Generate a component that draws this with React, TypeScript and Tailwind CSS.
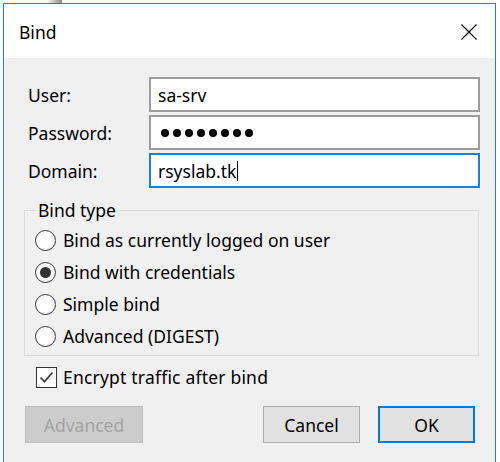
import { ReactNode } from 'react';

const font = { fontFamily: '"Noto Sans", "Open Sans", sans-serif' };

function Field({ label, children, focused }: { label: string; children: ReactNode; focused?: boolean }) {
  return (
    <div className="flex items-center h-[35px]">
      <div className="w-[121px] shrink-0 text-black">{label}</div>
      <div
        className={
          'w-[331px] shrink-0 h-[35px] border-2 bg-white flex items-center pl-[7px] ' +
          (focused ? 'border-[#1a7fd6]' : 'border-[#9c9c9c]')
        }
      >
        {children}
      </div>
    </div>
  );
}

function Radio({ label, checked }: { label: string; checked?: boolean }) {
  return (
    <div className="flex items-center h-[32px]">
      <div className="w-[21px] h-[21px] rounded-full border border-[#333] bg-white flex items-center justify-center">
        {checked && <div className="w-[11px] h-[11px] rounded-full bg-[#333]" />}
      </div>
      <span className="ml-[7px]">{label}</span>
    </div>
  );
}

export default function App() {
  return (
    <div className="w-[500px] h-[462px] bg-white flex flex-col overflow-hidden text-[17.5px] leading-[24px] text-black" style={font}>
      {/* bit of the window behind */}
      <div className="h-[3px] flex">
        <div className="ml-[48px] w-[14px] h-[3px] bg-linear-to-r from-[#f4f4f4] to-[#8a8a8a]" />
      </div>
      <div className="ml-[3px] w-[493px] flex-1 flex flex-col border-t border-l border-r border-[#1c80d6]">
        {/* title bar */}
        <div className="h-[54px] bg-white flex items-center justify-between pl-[15px] pr-[18px] pt-[2px]">
          <span className="text-[17.5px]">Bind</span>
          <svg width="16" height="16" viewBox="0 0 16 16" className="mt-[-1px]">
            <path d="M0.5 0.5 L15.5 15.5 M15.5 0.5 L0.5 15.5" stroke="#000" strokeWidth="1.1" fill="none" />
          </svg>
        </div>

        {/* body */}
        <div className="flex-1 bg-[#f0f0f0] pl-[20px] pr-[14px] pt-[19px] flex flex-col">
          <div className="pl-[4px] flex flex-col gap-[3px]">
            <Field label="User:">
              <span>sa-srv</span>
            </Field>
            <Field label="Password:">
              <div className="flex gap-[4px] pl-[3px]">
                {Array.from({ length: 8 }).map((_, i) => (
                  <span key={i} className="w-[8px] h-[8px] rounded-full bg-black" />
                ))}
              </div>
            </Field>
            <Field label="Domain:" focused>
              <span>rsyslab.tk</span>
              <span className="w-[1px] h-[20px] bg-black ml-[1px]" />
            </Field>
          </div>

          <fieldset className="mt-[10px] w-[455px] border border-[#dcdcdc] pl-[10px] pt-[2px] pb-[3px]">
            <legend className="ml-[1px] px-[2px] leading-[24px]">Bind type</legend>
            <Radio label="Bind as currently logged on user" />
            <Radio label="Bind with credentials" checked />
            <Radio label="Simple bind" />
            <Radio label="Advanced (DIGEST)" />
          </fieldset>

          <div className="mt-[9px] h-[24px] flex items-center pl-[12px]">
            <div className="w-[21px] h-[21px] border border-[#333] bg-white flex items-center justify-center">
              <svg width="15" height="15" viewBox="0 0 15 15">
                <path d="M1.5 7.5 L5.5 11.5 L13.5 2.5" stroke="#333" strokeWidth="1.6" fill="none" />
              </svg>
            </div>
            <span className="ml-[6px] tracking-[0.2px]">Encrypt traffic after bind</span>
          </div>

          <div className="mt-[17px] flex items-center pl-[1px]">
            <div className="w-[118px] h-[37px] bg-[#cccccc] border border-[#bfbfbf] text-[#a3a3a3] flex items-center justify-center">
              Advanced
            </div>
            <div className="ml-auto w-[97px] h-[37px] bg-[#e1e1e1] border border-[#adadad] flex items-center justify-center">
              Cancel
            </div>
            <div className="ml-[18px] mr-[6px] w-[97px] h-[37px] bg-[#e1e1e1] border-2 border-[#0078d7] flex items-center justify-center">
              OK
            </div>
          </div>
        </div>
      </div>
    </div>
  );
}
